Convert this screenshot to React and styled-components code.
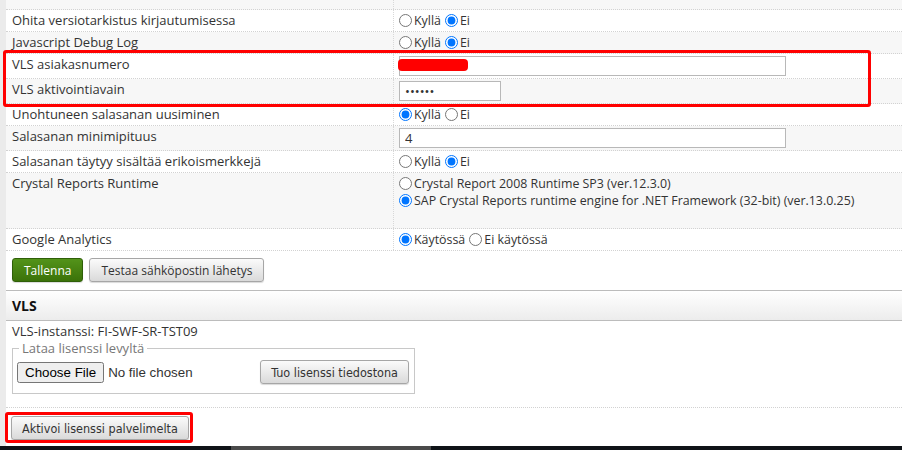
import React from "react";
import styled, { createGlobalStyle } from "styled-components";

const GlobalStyle = createGlobalStyle`
  html, body {
    margin: 0;
    padding: 0;
    background: #ebebeb;
  }
  body {
    font-family: "Open Sans", "Liberation Sans", sans-serif;
    font-size: 13px;
    color: #333;
  }
`;

const Page = styled.div`
  display: flex;
  flex-direction: column;
  height: 450px;
  overflow: hidden;
`;

const Content = styled.div`
  flex: 1;
  margin-left: 6px;
  background: #fff;
  display: flex;
  flex-direction: column;
`;

const Row = styled.div`
  display: grid;
  grid-template-columns: 387px 1fr;
  background: ${p => (p.$alt ? "#f7f7f7" : "#fff")};
  border-bottom: 1px dotted #d2d2d2;
  height: ${p => p.$height || "auto"};
`;

const Label = styled.div`
  padding: 2px 6px;
  line-height: 17px;
  height: 17px;
`;

const Value = styled.div`
  border-left: 1px dotted #d8d8d8;
  padding: 2px 5px ${p => p.$extra || "2px"} 5px;
  line-height: 17px;
  font-size: 12.4px;
  display: flex;
  flex-direction: ${p => (p.$column ? "column" : "row")};
  align-items: flex-start;
  gap: ${p => (p.$column ? "0" : "4px")};
`;

const Option = styled.label`
  display: flex;
  align-items: center;
  height: 17px;
  white-space: nowrap;
`;

const Radio = styled.input.attrs({ type: "radio" })`
  width: 13px;
  height: 13px;
  margin: 0 2px 0 0;
`;

const TextInput = styled.input`
  box-sizing: border-box;
  width: ${p => p.$width || "387px"};
  height: 20px;
  border: 1px solid #b8b8b8;
  padding: 0 5px;
  font-family: "Open Sans", "Liberation Sans", sans-serif;
  font-size: 13px;
  color: #333;
  background: #fff;
  display: block;
`;

const FieldWrap = styled.div`
  position: relative;
`;

const Redaction = styled.span`
  position: absolute;
  left: -1px;
  top: 3px;
  width: 70px;
  height: 12px;
  border-radius: 4px;
  background: #ff0000;
`;

const Highlight = styled.div`
  position: relative;

  &::after {
    content: "";
    position: absolute;
    top: -4px;
    bottom: -3px;
    left: -3px;
    right: 31px;
    border: 3px solid #ff0000;
    border-radius: 3px;
    pointer-events: none;
  }
`;

const Actions = styled.div`
  display: flex;
  gap: 6px;
  padding: 7px 6px 8px;
`;

const Button = styled.button`
  flex-shrink: 0;
  white-space: nowrap;
  height: ${p => p.$height || "24px"};
  padding: 0 ${p => p.$pad || "11px"};
  border-radius: 3px;
  font-family: ${p =>
    p.$alt
      ? '"DejaVu Sans Condensed", "DejaVu Sans", sans-serif'
      : '"Open Sans", "Liberation Sans", sans-serif'};
  font-size: ${p => (p.$alt ? "12.5px" : "12px")};
  color: ${p => (p.$primary ? "#fff" : "#333")};
  border: 1px solid ${p => (p.$primary ? "#2f5f08" : "#a6a6a6")};
  background: ${p =>
    p.$primary
      ? "linear-gradient(#53931a, #3b7209)"
      : "linear-gradient(#fbfbfb, #dadada)"};
  box-shadow: 0 1px 1px rgba(0, 0, 0, 0.15);
  cursor: pointer;
`;

const SectionHeader = styled.div`
  border-top: 1px solid #bcbcbc;
  border-bottom: 1px solid #bcbcbc;
  height: 29px;
  display: flex;
  align-items: center;
  padding-left: 6px;
  background: linear-gradient(#ffffff, #ececec);
  font-weight: 700;
  font-size: 14px;
  color: #111;
`;

const SectionBody = styled.div`
  padding: 2px 6px 13px;
  border-bottom: 1px dotted #d2d2d2;
  line-height: 17px;
`;

const Fieldset = styled.fieldset`
  box-sizing: border-box;
  width: 403px;
  margin: 0;
  padding: 3px 5px 9px 4px;
  border: 1px solid #c8c8c8;
`;

const Legend = styled.legend`
  margin-left: 2px;
  padding: 0 3px;
  color: #777;
`;

const FileRow = styled.div`
  display: flex;
  align-items: center;
  justify-content: space-between;
`;

const FileInput = styled.input.attrs({ type: "file" })`
  font-family: "Liberation Sans", Arial, sans-serif;
  font-size: 13.33px;
  width: 200px;
`;

const Footer = styled.div`
  padding: 8px 5px 0 5px;
`;

const RedBox = styled.div`
  position: relative;
  display: inline-block;

  &::after {
    content: "";
    position: absolute;
    top: -4px;
    bottom: -3px;
    left: -6px;
    right: -4px;
    border: 3px solid #ff0000;
    border-radius: 3px;
    pointer-events: none;
  }
`;

const Taskbar = styled.div`
  height: 4px;
  background: #0f1317;
  display: flex;
`;

const TaskbarThumb = styled.div`
  margin-left: 231px;
  width: 200px;
  background: #4a4a4a;
`;

const YesNo = ({ name, yes }) => (
  <>
    <Option>
      <Radio name={name} defaultChecked={yes} />
      Kyllä
    </Option>
    <Option>
      <Radio name={name} defaultChecked={!yes} />
      Ei
    </Option>
  </>
);

export default function App() {
  return (
    <Page>
      <GlobalStyle />
      <Content>
        <Row $alt $height="9px">
          <div />
          <Value style={{ padding: 0 }} />
        </Row>
        <Row>
          <Label>Ohita versiotarkistus kirjautumisessa</Label>
          <Value>
            <YesNo name="ohita" yes={false} />
          </Value>
        </Row>
        <Row $alt>
          <Label>Javascript Debug Log</Label>
          <Value>
            <YesNo name="debug" yes={false} />
          </Value>
        </Row>
        <Highlight>
          <Row>
            <Label>VLS asiakasnumero</Label>
            <Value>
              <FieldWrap>
                <TextInput defaultValue="" />
                <Redaction />
              </FieldWrap>
            </Value>
          </Row>
          <Row $alt>
            <Label>VLS aktivointiavain</Label>
            <Value>
              <TextInput type="password" $width="102px" defaultValue="secret" />
            </Value>
          </Row>
        </Highlight>
        <Row>
          <Label>Unohtuneen salasanan uusiminen</Label>
          <Value>
            <YesNo name="unohtunut" yes />
          </Value>
        </Row>
        <Row $alt>
          <Label>Salasanan minimipituus</Label>
          <Value>
            <TextInput defaultValue="4" />
          </Value>
        </Row>
        <Row>
          <Label>Salasanan täytyy sisältää erikoismerkkejä</Label>
          <Value>
            <YesNo name="erikois" yes={false} />
          </Value>
        </Row>
        <Row $alt>
          <Label>Crystal Reports Runtime</Label>
          <Value $column $extra="19px">
            <Option>
              <Radio name="crystal" />
              Crystal Report 2008 Runtime SP3 (ver.12.3.0)
            </Option>
            <Option>
              <Radio name="crystal" defaultChecked />
              SAP Crystal Reports runtime engine for .NET Framework (32-bit) (ver.13.0.25)
            </Option>
          </Value>
        </Row>
        <Row>
          <Label>Google Analytics</Label>
          <Value>
            <Option>
              <Radio name="ga" defaultChecked />
              Käytössä
            </Option>
            <Option>
              <Radio name="ga" />
              Ei käytössä
            </Option>
          </Value>
        </Row>

        <Actions>
          <Button $primary $pad="11px">Tallenna</Button>
          <Button>Testaa sähköpostin lähetys</Button>
        </Actions>

        <SectionHeader>VLS</SectionHeader>
        <SectionBody>
          <div>VLS-instanssi: FI-SWF-SR-TST09</div>
          <Fieldset>
            <Legend>Lataa lisenssi levyltä</Legend>
            <FileRow>
              <FileInput />
              <Button $alt $pad="10px">Tuo lisenssi tiedostona</Button>
            </FileRow>
          </Fieldset>
        </SectionBody>

        <Footer>
          <RedBox>
            <Button $alt $pad="10px">Aktivoi lisenssi palvelimelta</Button>
          </RedBox>
        </Footer>
      </Content>
      <Taskbar>
        <TaskbarThumb />
      </Taskbar>
    </Page>
  );
}
